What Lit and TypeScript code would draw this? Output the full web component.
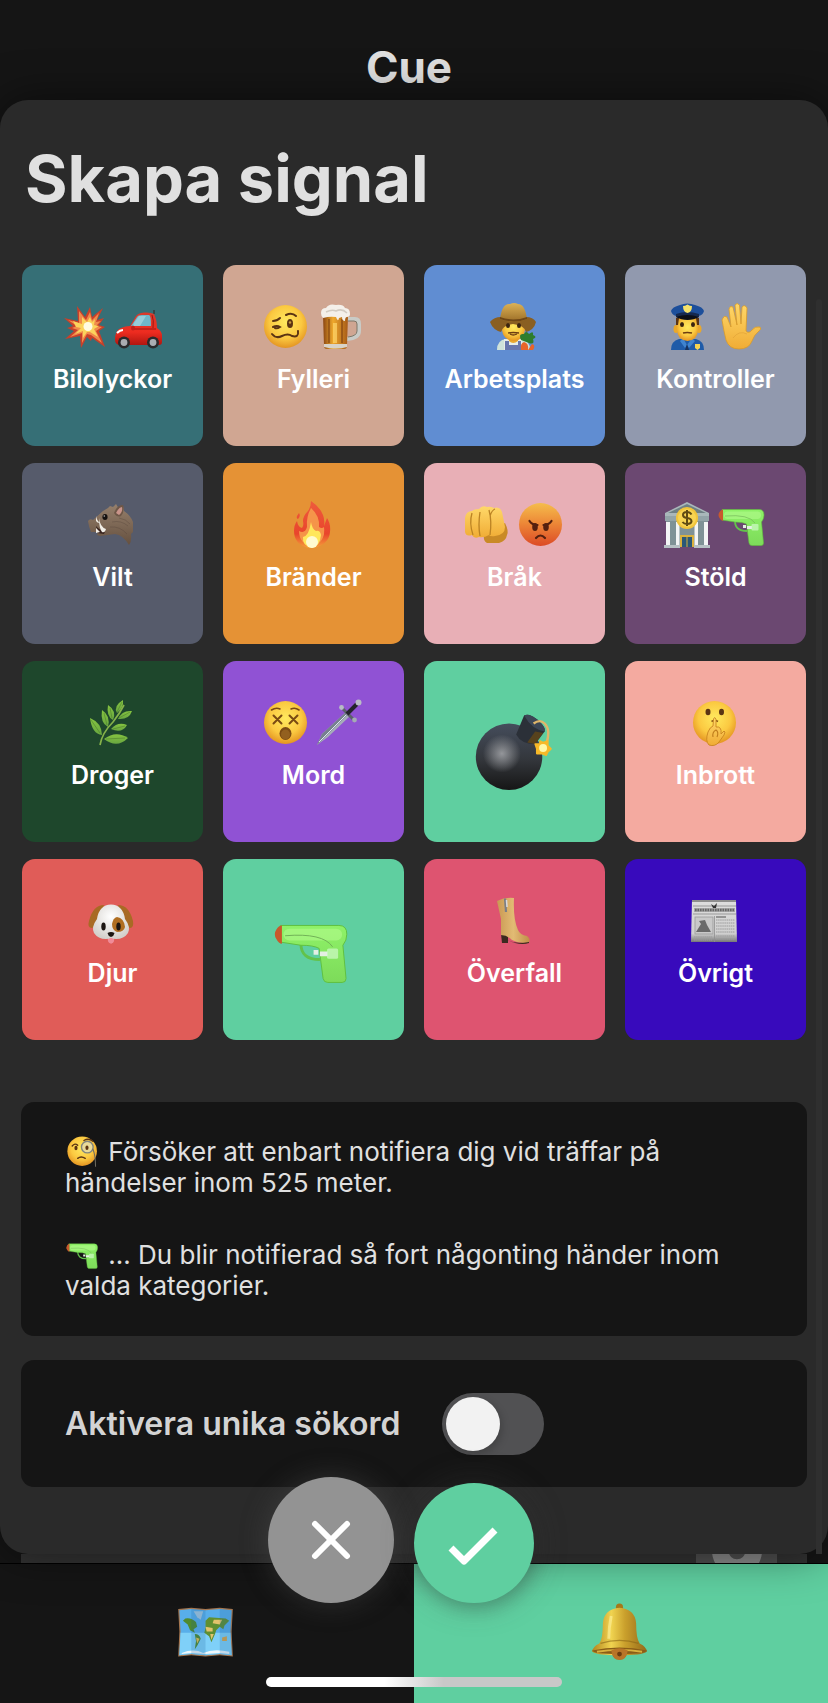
import { LitElement, html, svg, css, TemplateResult } from "lit";
import { customElement, state } from "lit/decorators.js";

type Art = TemplateResult;

interface Category {
  id: string;
  name: string;
  icons: string[];
  selectedIcon?: string;
}

const face = (fill = "url(#face)") => svg`<circle cx="23.5" cy="23.5" r="21.5" fill=${fill}/>`;
const INK = "#5b3413";

const ART: Record<string, Art> = {
  boom: svg`
    <path fill="#c9402a" d="M3 15 17 18 16 3 24 14 29 4 31 14 42 5 36 17 43 15 38 22 44 24 38 28 44 44 31 35 30 38 26 34 20 45 19 33 4 36 13 28 6 25 12 23Z"/>
    <path fill="#f08a4b" d="M7 17 18 20 18 8 25 17 29 9 31 17 38 10 35 19 40 18 35 23 41 24 35 28 41 40 30 32 26 31 21 40 21 30 9 34 17 27 11 25 16 23Z"/>
    <path fill="#fbd35c" d="M12 18 21 21 21 14 26 19 29 14 31 19 34 16 33 22 38 23 33 26 37 34 29 29 26 29 22 35 22 28 14 31 20 25 15 24Z"/>
    <circle cx="27" cy="23.500" r="4.500" fill="#fffbe2"/>`,
  car: svg`
    <path d="M39 11 39 7" stroke="#3a3a3a" stroke-width="1.500"/>
    <path fill="url(#car)" d="M0 37Q0 27 6 25Q10 23 15 23L21 13Q23 10 29 9.500Q36 9 39 11Q42 17 42 25Q47 28 47 33V39Q47 42 44 42H4Q0 41 0 37Z"/>
    <path fill="#6fb6c9" d="M16 23 22 14Q23 12 27 12H34Q36 12 36 23Z"/>
    <path fill="#b7dee6" d="M19 20 24 13H31L25 23H18Z" opacity=".55"/>
    <path d="M18 26H41M37 12Q39 17 38 25" stroke="#9c1712" stroke-width="1" fill="none"/>
    <path d="M2 30Q5 27 8 27" stroke="#fff" stroke-width="2" fill="none"/>
    <ellipse cx="18" cy="25" rx="2" ry="2.500" fill="#c0201a"/>
    <circle cx="9" cy="39.500" r="6" fill="#2a2a2c"/><circle cx="9" cy="39.500" r="3.400" fill="#a9adb2"/>
    <circle cx="38" cy="39.500" r="6" fill="#2a2a2c"/><circle cx="38" cy="39.500" r="3.400" fill="#a9adb2"/>`,
  woozy: svg`${face()}
    <g stroke=${INK} fill="none" stroke-linecap="round" stroke-width="2">
      <path d="M11 18Q15 18 18 15"/><path d="M24 12Q30 9 34 13"/>
      <path d="M11 24Q15 22 18 24Q15 26 13 25"/>
      <path d="M10 31Q14 36 20 33Q26 30 30 33Q37 35 36 28"/>
    </g><ellipse cx="28" cy="20.500" rx="3" ry="4.500" fill=${INK}/><circle cx="28" cy="19.500" r="1.200" fill="#c79a40"/>`,
  beer: svg`
    <path d="M31 16H39Q43 16 43 21V28Q43 35 31 36" fill="none" stroke="#c9cbc6" stroke-width="4"/>
    <path d="M32 18H38Q41 18 41 21V28Q41 33 32 34" fill="none" stroke="#7d7768" stroke-width="1"/>
    <path d="M7 12H32L31 43Q31 46 28 46H11Q8 46 8 43Z" fill="url(#beer)"/>
    <path d="M8 41H31V44Q20 47 8 44Z" fill="#d8d3c8"/>
    <path d="M13 16V40M26 16V40" stroke="#7b3d10" stroke-width="2" opacity=".55"/>
    <path d="M19 20V40" stroke="#ffd66b" stroke-width="4" opacity=".7"/>
    <path d="M5 10Q5 5 10 5Q13 0 20 2Q27 1 29 5Q34 5 34 11Q34 14 31 14Q29 14 29 18Q26 18 26 14L23 15Q22 20 20 14Q14 13 7 15Q5 13 5 10Z" fill="#f4f0ea"/>
    <path d="M10 9Q16 6 20 8Q26 5 31 10" stroke="#d3ccc2" stroke-width="1.500" fill="none"/>`,
  farmer: svg`
    <path d="M7 47Q7 37 16 36H31Q40 37 40 47Z" fill="#cfe3da"/>
    <path d="M14 36V47H32V36Z" fill="#e7ede6"/>
    <path d="M15 38H19V42H28V38H31V47H15Z" fill="#6878ae"/>
    <path d="M19 33H28V38Q23 42 19 38Z" fill="#e9a92f"/>
    <ellipse cx="23.500" cy="26" rx="11.500" ry="12" fill="url(#face)"/>
    <path d="M0 19Q4 14 11 14Q23 20 36 14Q43 14 46 19Q44 27 36 29Q34 22 23 21Q13 22 11 29Q3 27 0 19Z" fill="#8a5f22"/>
    <path d="M10 16Q12 0 20 1Q24-1 28 1Q35 1 37 16Q24 22 10 16Z" fill="url(#hat)"/>
    <path d="M10 14Q23 19 37 14L37 16Q24 21 10 16Z" fill="#6f4716"/>
    <ellipse cx="18" cy="22.500" rx="2" ry="2.600" fill="#3b2410"/><ellipse cx="29" cy="22.500" rx="2" ry="2.600" fill="#3b2410"/>
    <path d="M18 30Q23 29 29 30M20 31Q23 33 27 31" stroke="#6d3d12" stroke-width="1.300" fill="none"/>
    <path d="M31 37Q28 30 34 31Q36 27 39 31Q44 27 43 32Q48 34 43 36Q45 42 39 40Z" fill="#2e7d2d"/>
    <path d="M31 47Q30 40 34 39Q39 40 38 47ZM38 47 42 41Q46 42 43 47Z" fill="#e8642a"/>`,
  police: svg`
    <path d="M7 47Q7 38 15 36H32Q40 38 40 47Z" fill="#1f5ba8"/>
    <path d="M19 35 23 42 28 35 31 38 25 45 23 42 21 45 16 38Z" fill="#3f84cf"/>
    <path d="M23 41 25 47H21Z" fill="#17335f"/>
    <path d="M31 41H36V45L33.500 47 31 45Z" fill="#f4d453"/>
    <ellipse cx="12" cy="26" rx="2.500" ry="4" fill="#e9a82c"/><ellipse cx="35" cy="26" rx="2.500" ry="4" fill="#e9a82c"/>
    <path d="M13 15H34V26Q34 37 23.500 38Q13 37 13 26Z" fill="url(#face)"/>
    <path d="M12 15H15L14 22H12ZM32 15H35V22H33Z" fill="#5b3413"/>
    <ellipse cx="18" cy="21.500" rx="2" ry="2.600" fill="#3b2410"/><ellipse cx="29" cy="21.500" rx="2" ry="2.600" fill="#3b2410"/>
    <path d="M19 30Q23 29 28 30" stroke="#6d3d12" stroke-width="1.600" fill="none"/>
    <path d="M7 8Q8 4 16 2Q23-1 31 2Q39 4 40 8Q39 12 35 13H12Q8 12 7 8Z" fill="#1d4f9b"/>
    <path d="M12 11Q23 7 35 11V14Q23 18 12 14Z" fill="#15294f"/>
    <path d="M12 14Q23 10 35 14Q30 17 23.500 17Q17 17 12 14Z" fill="#0b0f18"/>
    <path d="M19 3Q21 3 23.500 1.500Q26 3 28 3Q28 9 23.500 10Q19 9 19 3Z" fill="#f6e26a"/>`,
  hand: svg`
    <path fill="url(#skin)" stroke="#d99a28" stroke-width=".8" d="M5 15Q6 12 9 14L13 24 11 6Q12 2 15 4L19 22 17 2Q19-1 21.500 2L23 21 24 4Q27 1 29 5L28 28Q31 31 34 27Q37 23 42 24Q44 26 41 28Q36 32 34 38Q31 46 21 46Q11 46 8 37Q6 29 4 17Z"/>
    <path d="M15 35Q21 27 29 31" stroke="#dfa036" stroke-width="1" fill="none" opacity=".6"/>`,
  boar: svg`
    <path d="M0 20Q2 17 5 19L15 10 20 7 22 5 25 6 28 3 31 8 35 5 36 10Q43 15 45 21V31L43 33Q44 40 41 44Q35 34 27 33L12 35 9 34 10 31 3 31Q1 27 0 20Z" fill="url(#boar)"/>
    <path d="M26 12Q29 4 35 4Q37 10 33 15Q29 17 26 12Z" fill="#6e5747"/>
    <path d="M28 12Q31 6 34 6Q35 11 31 14Z" fill="#c9948a"/>
    <ellipse cx="17" cy="16" rx="2.600" ry="3" fill="#16110f"/><circle cx="16.300" cy="15" r=".8" fill="#bbb"/>
    <path d="M8 25Q13 31 18 28L16 33 9 32Z" fill="#37231e"/>
    <path d="M11 17Q12 26 18 28Q17 32 14 31Q11 27 11 17ZM8 15Q9 20 12 22 9 22 8 20ZM8 27 12 31 8 32Z" fill="#f2eee6"/>
    <path d="M24 21Q33 19 40 25M22 26Q32 25 39 33M31 17Q38 18 42 23" stroke="#54433a" stroke-width="1" fill="none" opacity=".35"/>`,
  fire: svg`
    <path d="M22 0Q31 6 34 14Q36 19 35 25L38 17Q42 23 41 31Q40 43 25 47H19Q5 43 5 30Q5 24 8 20Q9 26 13 27Q15 25 14 20Q14 15 19 10Q22 6 22 0ZM10 12Q12 15 9 18 6 17 10 12Z" fill="url(#fire)"/>
    <path d="M22 7Q31 15 30 26Q33 28 35 26Q37 40 24 46Q10 43 10 30Q16 33 18 26Q17 16 22 7Z" fill="#f7a14d" opacity=".85"/>
    <path d="M22 21Q23 28 27 30Q31 29 32 34Q31 45 23 47Q13 45 14 36Q20 35 22 21Z" fill="#ffe75b"/>
    <ellipse cx="23" cy="41" rx="6" ry="6" fill="#fffbd0"/>`,
  fist: svg`
    <path d="M21 30Q34 26 42 22Q46 30 44 34Q43 40 36 42H24Q20 40 21 34Z" fill="#c98a26"/>
    <path d="M2 17Q3 10 9 10Q11 8 16 8Q19 4 24 6Q27 5 31 7Q37 5 39 11L42 26Q42 34 32 35Q28 36 26 34Q21 37 16 36Q11 38 9 34Q3 36 2 31Z" fill="url(#skin)"/>
    <path d="M9 12Q6 22 10 34M17 11Q15 24 17 35M26 9Q29 20 27 34M27 15Q29 9 32 8" stroke="#bb8324" stroke-width="1.300" fill="none"/>`,
  angry: svg`${face("url(#rage)")}
    <g stroke="#54200f" stroke-width="2.200" stroke-linecap="round" fill="none">
      <path d="M12.500 20Q15 24 20.500 24"/><path d="M34.500 20Q32 24 26.500 24"/>
      <path d="M19 37Q23.500 32 28 37"/>
    </g><ellipse cx="18" cy="26" rx="2.800" ry="4" fill="#54200f"/><ellipse cx="29" cy="26" rx="2.800" ry="4" fill="#54200f"/>`,
  bank: svg`
    <path d="M1 12 23 1 45 12V17H1Z" fill="#a9b7ba"/><path d="M4 12 23 3 42 12Z" fill="#6e8084"/>
    <path d="M2 17H44V45H2Z" fill="#7f9296"/><path d="M1 15H45V20H1Z" fill="#93a4a8"/>
    <path d="M2 21H6V44H2ZM12 21H15.500V44H12ZM30.500 21H34V44H30.500ZM40 21H44V44H40Z" fill="#f3f5f5"/>
    <path d="M16 34H30V46H16Z" fill="#d9b13e"/><path d="M18 36H22.500V46H18ZM23.500 36H28V46H23.500Z" fill="#2b5877"/>
    <path d="M0 44H16V47H0ZM30 44H46V47H30Z" fill="#b6c1c4"/>
    <circle cx="23" cy="17" r="11" fill="#f1c43b"/><circle cx="23" cy="17" r="9" fill="#f8d452"/>
    <path d="M27.500 13.500Q26 11 23 11Q19 11 19 14Q19 16.500 23 17Q27.500 17.500 27.500 20.500Q27 23 23 23Q20 23 18.500 21M23 9V25" stroke="#5f4a12" stroke-width="2" fill="none"/>`,
  gun: svg`
    <path d="M17 20Q17 30 29 30" fill="none" stroke="#62c24b" stroke-width="1.800"/>
    <path d="M4 8.500H41Q46 8.500 46 14Q46 18 43.500 21L45.500 42Q45.500 44.500 43 44.500H34Q31.500 44.500 31 42L28.500 23Q25 21 17 21L4 19Z" fill="url(#gun)" stroke="#5fbf3d" stroke-width=".6"/>
    <path d="M5 8.500Q3 8.500 1.500 11Q-.5 14 1.500 17Q3 20 5 20Z" fill="#c8592c"/>
    <rect x="6" y="10.500" width="37" height="7.500" rx="3.700" fill="#b3fa8c" opacity=".6"/>
    <path d="M7 15Q31 13 37 22" stroke="#6faf55" stroke-width=".6" fill="none"/>
    <path d="M25 24H28V27H25ZM29 25H34V28H29Z" fill="#e4efe4"/><rect x="33.500" y="23" width="7" height="6.500" rx="1" fill="#c6f8bc" opacity=".8"/>`,
  herb: svg`
    <path d="M12 46Q14 34 25 23Q32 14 36 6" stroke="#86b24a" stroke-width="1.700" fill="none"/>
    <g fill="url(#leaf)">
      <path d="M2 19Q14 24 14 36Q4 35 2 19Z"/><path d="M14 11Q23 17 20 28Q12 24 14 11Z"/>
      <path d="M20 6Q29 12 25 21Q18 17 20 6Z"/><path d="M35 1Q36 9 29 14Q25 7 35 1Z"/>
      <path d="M44 12Q41 21 30 20Q34 11 44 12Z"/><path d="M39 26Q34 35 23 30Q30 22 39 26Z"/>
      <path d="M40 39Q29 50 16 40Q28 31 40 39Z"/>
    </g>
    <path d="M3 21 12 34M16 14 19 26M22 9 24 19M34 3 29 13M42 13 31 19M37 27 25 30M37 39 18 40" stroke="#3c6b23" stroke-width=".6" fill="none" opacity=".7"/>`,
  dizzy: svg`${face()}
    <g stroke="#7a4a12" stroke-width="2" stroke-linecap="round" fill="none">
      <path d="M11.500 16.500 19.500 24.500M19.500 16.500 11.500 24.500M27.500 16.500 35.500 24.500M35.500 16.500 27.500 24.500"/>
      <path d="M9.500 11Q14 8 18 10M29 10Q33 8 37 11" stroke-width="1.600"/>
    </g><ellipse cx="23.500" cy="34.500" rx="6" ry="6.500" fill="#7c4b13"/><ellipse cx="23.500" cy="35.500" rx="4.500" ry="5" fill="#93601f"/>`,
  dagger: svg`
    <path d="M1 46 6 35 30 13 34 17 12 38Z" fill="#a6adb9"/><path d="M1 46 6 35 30 13 32 15Z" fill="#76808f"/>
    <path d="M3 43 31 15" stroke="#dce5ee" stroke-width="1"/>
    <path d="M26 9 38 21" stroke="#5c606a" stroke-width="3"/>
    <path d="M31 15 41 5" stroke="#24242b" stroke-width="4"/>
    <circle cx="25.500" cy="8.500" r="2.400" fill="#b7bcc5"/><circle cx="38.500" cy="21" r="2.400" fill="#a5abb4"/><circle cx="42.500" cy="3.500" r="3" fill="#b9bcc6"/>`,
  hush: svg`${face()}
    <ellipse cx="17" cy="13" rx="2.500" ry="3.200" fill=${INK}/><ellipse cx="30.500" cy="13" rx="2.500" ry="3.200" fill=${INK}/>
    <path d="M20.500 22.500Q23.500 20.500 27 22.500" stroke="#8a5718" stroke-width="1.600" fill="none"/>
    <path d="M22.500 20Q23.500 17 25 20L25 28Q31 27 30 35L33 32Q35 32 33 36L28 43Q24 48 18 46Q14 42 17 33Q19 28 22 27Z" fill="url(#skin)" stroke="#c98520" stroke-width=".9"/>
    <path d="M22 38Q21 33 25 31Q28 33 26 38" stroke="#bf7d1c" stroke-width="1.100" fill="none"/>`,
  dog: svg`
    <path d="M16 8Q5 8 1 24Q-1 31 4 31Q9 29 13 20Z" fill="#a86a24"/><path d="M30 8Q41 8 45 24Q46 31 42 31Q37 29 33 20Z" fill="#a86a24"/>
    <path d="M20 40H26Q27 46 23 46.500Q19 46 20 40Z" fill="#f08b98"/>
    <path d="M23 7.500Q35 8 37 22Q43 30 40 36Q36 42 28 42Q25 42 23 41Q21 42 18 42Q10 42 6 36Q3 30 9 22Q11 8 23 7.500Z" fill="url(#fur)"/>
    <path d="M29 20Q36 21 37 30Q36 35 29 35Q24 33 24 27Q25 21 29 20Z" fill="#b06e21"/>
    <ellipse cx="15.500" cy="29.500" rx="2.200" ry="4" fill="#1b1511"/><ellipse cx="30.500" cy="29.500" rx="2.200" ry="4" fill="#1b1511"/>
    <path d="M19.500 36Q23 34 26.500 36Q26 39 23 40Q20 39 19.500 36Z" fill="#1b1511"/>
    <path d="M21 42Q21 46 23 46.500Q26 46 25 42L23 41Z" fill="#f08b98"/>`,
  boot: svg`
    <path d="M11 37H18V46H12Z" fill="#3c2a20"/><path d="M17 43Q28 48 39 44V46Q33 48 25 46Z" fill="#3c2a20"/>
    <path d="M7 4Q15 0 24 1Q23 22 28 33Q30 38 37 39Q41 42 39 45Q29 47 22 43Q17 38 11 38Q11 28 11 22Z" fill="url(#boot)"/>
    <path d="M15 1.500 16 15" stroke="#7b7e85" stroke-width="2.200"/><path d="M16.500 3 17 10" stroke="#d9dade" stroke-width="1.500"/>`,
  paper: svg`
    <path d="M1 3H45L46 45H0Z" fill="url(#paper)"/><path d="M1 3H45V5H1Z" fill="#8e8e8e"/>
    <path d="M2 9H45M2 17H45" stroke="#999" stroke-width="1"/>
    <path d="M3 11H44V15H3Z" fill="#a8a8a8"/><path d="M4 13H43" stroke="#666" stroke-width="2.600" stroke-dasharray="1.600 .9"/>
    <path d="M20 7 23 9 26 6 25 11H22Z" fill="#333"/>
    <rect x="4" y="20" width="18" height="17" fill="#c9c9c9" stroke="#999" stroke-width=".8"/>
    <path d="M5 35 10 27 8 24 14 23 16 28 20 35Z" fill="#6a6a6a"/>
    <path d="M25 20H35" stroke="#777" stroke-width="1.400"/>
    <path d="M25 23H44M25 26H44M25 29H44M25 32H44M25 35H44M3 40H21M25 39H44M3 43H21M25 42H44" stroke="#9b9b9b" stroke-width="1.200" stroke-dasharray="1.500 .6"/>
    <path d="M23.500 19V45" stroke="#8f8f8f" stroke-width=".8"/>`,
  bomb: svg`
    <circle cx="21.500" cy="27" r="21" fill="url(#bomb)"/><ellipse cx="17" cy="25" rx="12" ry="12" fill="url(#glow)"/>
    <path d="M26 13 31 1Q34-1 40 4Q45 9 44 11L38 19Q29 19 26 13Z" fill="#2b3038"/>
    <path d="M31 1Q34-1 40 4Q45 9 44 11Q36 10 31 1Z" fill="#3c4656"/>
    <path d="M33 18 38 11 43 12 38 19Z" fill="#6b4a12" opacity=".7"/>
    <path d="M37 6Q41 3 44 6Q48 10 45 19" stroke="#e0b66a" stroke-width="1.500" fill="none"/>
    <path d="M41 17 43 18 46 17 46 20 48 22 46 24 45 26 42 25 39 25 39 22 38 19 41 19Z" fill="#f7b928" stroke="#f7b928" stroke-linejoin="round"/><circle cx="43" cy="21.500" r="2.500" fill="#fff9a8"/>`,
  monocle: svg`${face()}
    <path d="M9 16Q13 11 17 15M26 8Q33 4 39 9" stroke=${INK} stroke-width="2" fill="none" stroke-linecap="round"/>
    <ellipse cx="14.500" cy="19" rx="2.300" ry="3.200" fill=${INK}/>
    <circle cx="31" cy="17.500" r="8.500" fill="#eadb9a" stroke="#82857f" stroke-width="2"/>
    <ellipse cx="30.500" cy="18.500" rx="2.300" ry="3.200" fill=${INK}/>
    <path d="M39 20Q43 30 43 46" stroke="#6d6a5f" stroke-width="1.500" fill="none"/>
    <path d="M17 34Q22 30 28 34" stroke=${INK} stroke-width="2" fill="none" stroke-linecap="round"/>`,
  map: svg`
    <path d="M1 5 12 4 24 5 36 4 47 5 46 24 47 45 36 44 24 45 12 44 1 45 2 24Z" fill="#a47650"/>
    <path d="M2 6 12 5 24 6 36 5 46 6 45 24 46 44 36 43 24 44 12 43 2 44 3 24Z" fill="#58aeea"/>
    <path d="M3 25H45L46 44 36 43 24 44 12 43 2 44Z" fill="#7fd0f8"/>
    <path d="M7 13Q12 12 16 16L17 20 14 22 15 25 11 23 9 18 5 15ZM15 26Q19 26 20 30L17 36 15 39 16 32Z" fill="#4f8a2e"/>
    <path d="M16 29 19 30 17 34Z" fill="#e8c14e"/>
    <path d="M24 15 27 12 41 13 44 15 40 19 39 22 36 20 33 23 32 26 29 33 27 28 23 25 24 21Z" fill="#5f8f31"/>
    <path d="M31 14 38 14 36 18 30 17ZM24 20 30 21 30 24 25 24ZM28 26 31 26 29 31Z" fill="#e2c36c"/><path d="M38 29 42 28 42 32 38 32Z" fill="#dba548"/>
    <path d="M14 7 22 7 20 14 17 12Z" fill="#b9cfdc" opacity=".8"/><path d="M4 42Q14 38 22 42Q31 38 44 41V43L36 42 24 43 12 42 4 43Z" fill="#eef7fb"/>
    <path d="M12 5V43L24 44V6Z" fill="#1f5f9b" opacity=".2"/><path d="M36 5V43L46 44V6Z" fill="#1f5f9b" opacity=".2"/>`,
  bell: svg`
    <circle cx="24" cy="3.500" r="3" fill="#a5791a"/>
    <ellipse cx="24" cy="42" rx="6" ry="5.500" fill="#9a5b1c"/>
    <path d="M24 4Q37 5 38 17Q38 30 41 34Q47 37 47 41Q43 44 24 44Q5 44 1 41Q1 37 7 34Q10 30 10 17Q11 5 24 4Z" fill="url(#bell)"/>
    <path d="M8 34Q24 29 40 34" stroke="#8a6516" stroke-width="1" fill="none" opacity=".6"/>
    <path d="M1 40Q24 35 47 40Q46 43 24 43Q2 43 1 40Z" fill="#8a5c17"/><path d="M5 41Q24 38 43 41" stroke="#d9b13d" stroke-width="1.600" fill="none"/>
    <path d="M17 40Q24 36 31 40Q30 48 24 48Q18 48 17 40Z" fill="#b87428"/><circle cx="24" cy="43" r="2" fill="#6d3c10"/>
    <path d="M17 11Q15 21 15 30" stroke="#fff3a0" stroke-width="2.500" fill="none" opacity=".6"/>`,
  gear: svg`
    <path fill="#8b8b8b" fill-rule="evenodd" d="M24 0A24 24 0 1 1 24 48A24 24 0 1 1 24 0ZM24 16A8 8 0 1 0 24 32A8 8 0 1 0 24 16Z"/>`,
};

const CATEGORIES: Category[] = [
  { id: "accident", name: "Bilolyckor", icons: ["boom", "car"] },
  { id: "drunk", name: "Fylleri", icons: ["woozy", "beer"] },
  { id: "work", name: "Arbetsplats", icons: ["farmer"] },
  { id: "control", name: "Kontroller", icons: ["police", "hand"] },
  { id: "wildlife", name: "Vilt", icons: ["boar"] },
  { id: "fires", name: "Bränder", icons: ["fire"] },
  { id: "brawl", name: "Bråk", icons: ["fist", "angry"] },
  { id: "theft", name: "Stöld", icons: ["bank", "gun"] },
  { id: "drugs", name: "Droger", icons: ["herb"] },
  { id: "murder", name: "Mord", icons: ["dizzy", "dagger"] },
  { id: "blast", name: "Explosion", icons: ["bomb"], selectedIcon: "bomb" },
  { id: "burglary", name: "Inbrott", icons: ["hush"] },
  { id: "animals", name: "Djur", icons: ["dog"] },
  { id: "shooting", name: "Skjutning", icons: ["gun"], selectedIcon: "gun" },
  { id: "assault", name: "Överfall", icons: ["boot"] },
  { id: "other", name: "Övrigt", icons: ["paper"] },
];

@customElement("app-root")
export class AppRoot extends LitElement {
  @state() private selected = new Set(["blast", "shooting"]);

  static styles = css`
    :host {
      display: flex;
      flex-direction: column;
      min-height: 100vh;
      background: #151515;
      color: #e0e0e0;
      font-family: Inter, "Open Sans", sans-serif;
      --green: #5fcfa0;
    }
    * { box-sizing: border-box; }
    h1, h2, p { margin: 0; }
    button { font: inherit; color: inherit; border: 0; padding: 0; cursor: pointer; }
    svg { display: block; overflow: visible; }
    .defs { position: absolute; width: 0; height: 0; }

    .header {
      height: 100px;
      padding: 40px 10px 0 0;
      text-align: center;
    }
    .brand { font-size: 44px; line-height: 54px; font-weight: 700; }

    .sheet {
      position: relative;
      z-index: 1;
      flex: 1;
      padding: 39px 21px 67px;
      border-radius: 28px;
      background: #2a2a2a;
      box-shadow: 0 0 44px rgba(0, 0, 0, 0.5);
    }
    .title {
      padding-left: 4px;
      font-size: 65px;
      line-height: 80px;
      font-weight: 700;
    }
    .track {
      position: absolute;
      top: 199px;
      right: 6px;
      bottom: 0;
      width: 6px;
      border-radius: 3px 3px 0 0;
      background: #2f2f2f;
    }

    .grid {
      display: grid;
      grid-template-columns: repeat(4, 1fr);
      gap: 17px 20px;
      margin: 46px 1px 62px;
    }
    .tile {
      display: flex;
      flex-direction: column;
      align-items: center;
      justify-content: flex-start;
      gap: 13px;
      aspect-ratio: 1;
      padding-top: 38px;
      border-radius: 13px;
      color: #fff;
      font-size: 25px;
      line-height: 30px;
      font-weight: 600;
    }
    .icons { display: flex; gap: 6px; padding-right: 2px; }
    .emoji { width: 48px; height: 48px; }
    .emoji.big { width: 76px; height: 76px; }
    .accident { background: #366f76; }
    .drunk { background: #d0a692; }
    .work { background: #608dd2; }
    .control { background: #9199ae; }
    .wildlife { background: #565b6b; }
    .fires { background: #e59235; }
    .brawl { background: #e8afb6; }
    .theft { background: #6b4871; }
    .drugs { background: #1e472c; }
    .murder { background: #9052d4; }
    .blast { background: #425064; }
    .burglary { background: #f4aaa0; }
    .animals { background: #e05c58; }
    .shooting { background: #8a6a4d; }
    .assault { background: #de5470; }
    .other { background: #380abc; }
    .tile.selected {
      justify-content: center;
      padding: 0 4px 0 0;
      background: var(--green);
    }

    .card { border-radius: 13px; background: #151515; }
    .info {
      display: flex;
      flex-direction: column;
      gap: 41px;
      padding: 34px 44px 35px;
      margin-bottom: 24px;
      font-size: 26px;
      line-height: 31px;
    }
    .inline {
      display: inline-block;
      width: 33px;
      height: 33px;
      margin: -8px 2px -6px 1px;
      vertical-align: -1px;
    }
    .keywords {
      display: flex;
      align-items: center;
      gap: 42px;
      min-height: 127px;
      padding: 0 44px;
      color: #d3d3d3;
      font-size: 32px;
      line-height: 40px;
      font-weight: 600;
    }
    .switch {
      appearance: none;
      width: 102px;
      height: 62px;
      margin: 0;
      padding: 4px;
      border-radius: 31px;
      background: #515153;
      cursor: pointer;
    }
    .switch::before {
      content: "";
      display: block;
      width: 54px;
      height: 54px;
      border-radius: 50%;
      background: #f2f2f2;
      box-shadow: 2px 3px 8px rgba(0, 0, 0, 0.2);
    }
    .switch:checked { background: var(--green); }
    .switch:checked::before { margin-left: auto; }

    .actions {
      position: absolute;
      right: 0;
      bottom: -49px;
      left: 0;
      display: flex;
      align-items: flex-end;
      justify-content: center;
      gap: 20px;
      padding-right: 26px;
    }
    .round {
      display: grid;
      place-items: center;
      border-radius: 50%;
      color: #fff;
    }
    .cancel {
      width: 126px;
      height: 126px;
      background: #939393;
      box-shadow: 0 0 28px rgba(90, 90, 90, 0.4);
    }
    .confirm {
      width: 120px;
      height: 120px;
      background: var(--green);
      box-shadow: 0 0 32px rgba(64, 64, 64, 0.4), 2px 6px 16px rgba(0, 0, 0, 0.15);
    }
    .glyph { width: 60px; height: 60px; }

    .peek {
      display: flex;
      height: 10px;
      padding: 0 21px;
      border-bottom: 1px solid #000;
    }
    .row {
      display: flex;
      justify-content: flex-end;
      flex: 1;
      padding-right: 30px;
      overflow: hidden;
      background: #333;
    }
    .settings {
      display: flex;
      align-items: flex-start;
      justify-content: center;
      width: 81px;
      background: #505050;
    }
    .gear { width: 50px; height: 50px; margin-top: -28px; }

    .nav { position: relative; display: flex; height: 139px; }
    .tab {
      display: grid;
      place-items: center;
      flex: 1;
      padding: 0 4px 4px 0;
    }
    .tab.active { background: var(--green); }
    .tab .emoji { width: 57px; height: 57px; }
    .home {
      position: absolute;
      right: 0;
      bottom: 16px;
      left: 0;
      width: 296px;
      height: 10px;
      margin: 0 auto;
      border-radius: 5px;
      background: linear-gradient(90deg, #fff 40%, #c8c8c8 60%);
    }
  `;

  private toggle(id: string) {
    const next = new Set(this.selected);
    if (!next.delete(id)) next.add(id);
    this.selected = next;
  }

  private emoji(name: string, cls = "emoji") {
    return html`<svg class=${cls} viewBox="0 0 48 48" aria-hidden="true">${ART[name]}</svg>`;
  }

  private tile(c: Category) {
    const on = this.selected.has(c.id);
    return html`
      <button
        type="button"
        class="tile ${c.id} ${on ? "selected" : ""}"
        aria-pressed=${on ? "true" : "false"}
        aria-label=${c.name}
        @click=${() => this.toggle(c.id)}
      >
        ${on
          ? this.emoji(c.selectedIcon ?? c.icons[0], "emoji big")
          : html`<span class="icons">${c.icons.map((i) => this.emoji(i))}</span><span>${c.name}</span>`}
      </button>
    `;
  }

  render() {
    return html`
      <svg class="defs" aria-hidden="true">
        <defs>
          <radialGradient id="face" cx=".5" cy=".4" r=".62"><stop offset="0" stop-color="#ffe95e"/><stop offset=".6" stop-color="#fbc941"/><stop offset="1" stop-color="#e2901f"/></radialGradient>
          <linearGradient id="rage" x2="0" y2="1"><stop offset="0" stop-color="#f5bd4c"/><stop offset=".5" stop-color="#ec8436"/><stop offset="1" stop-color="#dc4a26"/></linearGradient>
          <linearGradient id="car" x2="0" y2="1"><stop offset="0" stop-color="#d83a2c"/><stop offset=".6" stop-color="#ee2c20"/><stop offset="1" stop-color="#b01610"/></linearGradient>
          <linearGradient id="beer"><stop offset="0" stop-color="#8a4512"/><stop offset=".4" stop-color="#efa92c"/><stop offset="1" stop-color="#a65a17"/></linearGradient>
          <linearGradient id="hat" x2="0" y2="1"><stop offset="0" stop-color="#dcb257"/><stop offset="1" stop-color="#9b6d26"/></linearGradient>
          <linearGradient id="skin" x2="0" y2="1"><stop offset="0" stop-color="#ffd869"/><stop offset="1" stop-color="#f0ac35"/></linearGradient>
          <linearGradient id="boar" x2="0" y2="1"><stop offset="0" stop-color="#96806c"/><stop offset="1" stop-color="#65503f"/></linearGradient>
          <linearGradient id="fire" x2="0" y2="1"><stop offset="0" stop-color="#ee5b3c"/><stop offset=".7" stop-color="#e9452c"/><stop offset="1" stop-color="#f5a03a"/></linearGradient>
          <linearGradient id="gun" x2="0" y2="1"><stop offset="0" stop-color="#8ff268"/><stop offset="1" stop-color="#7ddb5a"/></linearGradient>
          <linearGradient id="leaf" x2="0" y2="1"><stop offset="0" stop-color="#86c440"/><stop offset="1" stop-color="#68a640"/></linearGradient>
          <radialGradient id="fur" cx=".5" cy=".35" r=".65"><stop offset="0" stop-color="#fff"/><stop offset="1" stop-color="#d3d0cb"/></radialGradient>
          <linearGradient id="boot"><stop offset="0" stop-color="#c99852"/><stop offset=".5" stop-color="#e2bb74"/><stop offset="1" stop-color="#c08d48"/></linearGradient>
          <linearGradient id="paper" x2="0" y2="1"><stop offset="0" stop-color="#dedede"/><stop offset=".8" stop-color="#cfcfcf"/><stop offset="1" stop-color="#777"/></linearGradient>
          <linearGradient id="bomb" x2="0" y2="1"><stop offset="0" stop-color="#454d5c"/><stop offset=".55" stop-color="#33363b"/><stop offset="1" stop-color="#161616"/></linearGradient>
          <radialGradient id="glow"><stop offset="0" stop-color="#94969a"/><stop offset="1" stop-color="#94969a" stop-opacity="0"/></radialGradient>
          <linearGradient id="bell"><stop offset="0" stop-color="#b3861e"/><stop offset=".35" stop-color="#f0d350"/><stop offset=".6" stop-color="#caa02c"/><stop offset="1" stop-color="#94691a"/></linearGradient>
        </defs>
      </svg>

      <header class="header"><h1 class="brand">Cue</h1></header>

      <main class="sheet">
        <h2 class="title">Skapa signal</h2>
        <div class="grid">${CATEGORIES.map((c) => this.tile(c))}</div>

        <section class="card info">
          <p>${this.emoji("monocle", "inline")} Försöker att enbart notifiera dig vid träffar på händelser inom 525 meter.</p>
          <p>${this.emoji("gun", "inline")} ... Du blir notifierad så fort någonting händer inom valda kategorier.</p>
        </section>

        <section class="card keywords">
          <label for="keywords">Aktivera unika sökord</label>
          <input id="keywords" class="switch" type="checkbox" role="switch" />
        </section>

        <div class="track"></div>
        <div class="actions">
          <button type="button" class="round cancel" aria-label="Avbryt">
            <svg class="glyph" viewBox="0 0 60 60" fill="none" stroke="currentColor" stroke-width="6" stroke-linecap="round">
              <path d="M14 14 46 46M46 14 14 46" />
            </svg>
          </button>
          <button type="button" class="round confirm" aria-label="Spara">
            <svg class="glyph" viewBox="0 0 60 60" fill="none" stroke="currentColor" stroke-width="7" stroke-linejoin="round">
              <path d="M7 35 20 48 51 17" />
            </svg>
          </button>
        </div>
      </main>

      <div class="peek"><div class="row"><div class="settings">${this.emoji("gear", "gear")}</div></div></div>

      <nav class="nav">
        <a class="tab" href="#karta" aria-label="Karta">${this.emoji("map")}</a>
        <a class="tab active" href="#signaler" aria-label="Signaler" aria-current="page">${this.emoji("bell")}</a>
        <span class="home"></span>
      </nav>
    `;
  }
}
